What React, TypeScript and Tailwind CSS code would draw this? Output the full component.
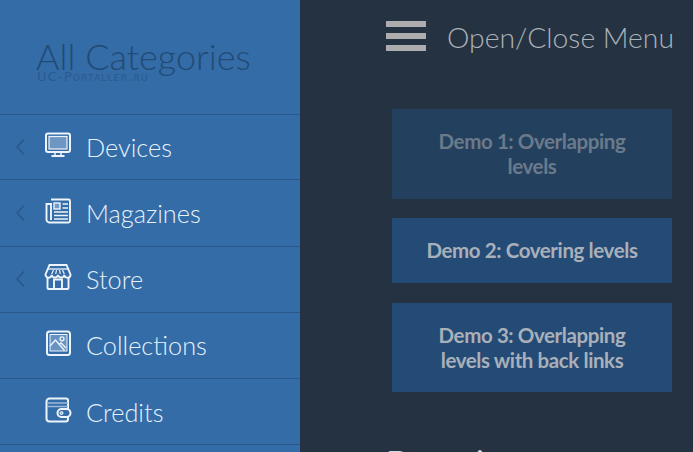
const C = "#eef4fb";
const F = "#9dbada";
const Monitor = () => (
  <svg width="28" height="26" viewBox="0 0 28 26" fill="none" stroke={C} strokeWidth="2">
    <rect x="2" y="1.500" width="24" height="18.500" rx="2" />
    <rect x="5" y="4.500" width="18" height="12.500" fill={F} fillOpacity="0.55" strokeWidth="1.200" />
    <path d="M11 20v3M17 20v3" strokeWidth="1.500" />
    <path d="M7.500 24h13" />
  </svg>
);
const News = () => (
  <svg width="28" height="26" viewBox="0 0 28 26" fill="none" stroke={C} strokeWidth="1.900">
    <path d="M7 1.500h17.500a1.500 1.500 0 0 1 1.500 1.500V23a1.500 1.500 0 0 1-1.500 1.500H5A3 3 0 0 1 2.500 22V6h4.500V22" />
    <rect x="10" y="5" width="6" height="6" fill={F} fillOpacity="0.6" strokeWidth="1.400" />
    <path d="M18.500 6H24M18.500 10H24M10 14H24M10 17.500H24M10 21H24" strokeWidth="1.400" />
  </svg>
);
const Store = () => (
  <svg width="28" height="26" viewBox="0 0 28 26" fill="none" stroke={C} strokeWidth="1.900">
    <path d="M5.500 1h17l4 9.500a3.100 3.100 0 0 1-6.200.3 3.200 3.200 0 0 1-6.300 0 3.200 3.200 0 0 1-6.300 0 3.100 3.100 0 0 1-6.200-.3z" />
    <path d="M4 5h20" strokeWidth="1.300" />
    <path d="M9.500 6l-1.800 4M12.500 6l-.8 4M15.500 6l.8 4M18.500 6l1.800 4" strokeWidth="1.200" />
    <path d="M3.500 13V24a1 1 0 0 0 1 1h19a1 1 0 0 0 1-1V13" />
    <path d="M10 25V15.500h8V25" />
  </svg>
);
const Picture = () => (
  <svg width="28" height="26" viewBox="0 0 28 26" fill="none" stroke={C} strokeWidth="2">
    <rect x="3" y="1.500" width="23" height="23.500" rx="2.500" />
    <rect x="6" y="4.500" width="17" height="16.500" fill={F} fillOpacity="0.5" strokeWidth="1" />
    <circle cx="18" cy="8.800" r="2" strokeWidth="1.300" />
    <path d="M6 16l5.500-6 9 10.500M15 14.500l2-1.500 5 5" strokeWidth="1.400" />
  </svg>
);
const Wallet = () => (
  <svg width="28" height="26" viewBox="0 0 28 26" fill="none" stroke={C} strokeWidth="2">
    <path d="M24 12V3.500A2 2 0 0 0 22 1.500H5.500A3 3 0 0 0 2.500 4.500v17a3 3 0 0 0 3 3H21.500a2.500 2.500 0 0 0 2.500-2.500V20" />
    <path d="M3 6h21M3 9.500h21" stroke={F} strokeWidth="1.500" />
    <rect x="13.500" y="12" width="13" height="8" rx="4" fill="#336ca7" />
    <circle cx="17.500" cy="16" r="1.500" fill={F} strokeWidth="1" />
  </svg>
);

const Chevron = () => (
  <svg width="11" height="18" viewBox="0 0 11 18" fill="none" stroke="#2a5688" strokeWidth="1.300">
    <path d="M9 1.500 2 9l7 7.500" />
  </svg>
);

const items = [
  { label: "Devices", icon: <Monitor />, more: true, cls: "h-[65px]" },
  { label: "Magazines", icon: <News />, more: true, cls: "h-[67px]" },
  { label: "Store", icon: <Store />, more: true, cls: "h-[66px] pb-[2px]" },
  { label: "Collections", icon: <Picture />, more: false, cls: "h-[66px] pb-[2px]" },
  { label: "Credits", icon: <Wallet />, more: false, cls: "h-[66px]" },
];

const demos = [
  { lines: ["Demo 1: Overlapping", "levels"], cls: "h-[90px] bg-[#23415f] text-[#6b7a8a]" },
  { lines: ["Demo 2: Covering levels"], cls: "mt-[19px] h-[65px] bg-[#244b75] text-[#a9b0ba]" },
  { lines: ["Demo 3: Overlapping", "levels with back links"], cls: "mt-[20px] h-[89px] bg-[#244b75] text-[#a9b0ba]" },
];

export default function App() {
  return (
    <div className="flex h-[452px] w-[693px] overflow-hidden bg-[#243241] font-['Lato','Liberation_Sans',sans-serif]">
      <aside className="flex w-[300px] shrink-0 flex-col bg-[#336ca7]">
        <div className="relative h-[115px] border-b border-[#2a5688] pt-[35px] pl-[36px]">
          <h2 className="text-[36px] leading-[43px] font-light whitespace-nowrap text-[#234a74]">All Categories</h2>
          <span className="absolute top-[70px] left-[37px] font-['DejaVu_Sans',sans-serif] text-[13px] leading-[14px] tracking-[1.200px] whitespace-nowrap text-[#2a5a92] [font-variant:small-caps]">
            UC-Portaller.ru
          </span>
        </div>
        {items.map((it) => (
          <div key={it.label} className={`flex shrink-0 items-center border-b border-[#2a5688] pl-[15px] ${it.cls}`}>
            <span className="flex w-[29px] shrink-0">{it.more && <Chevron />}</span>
            <span className="flex w-[29px] shrink-0 -translate-y-[2px]">{it.icon}</span>
            <span className="ml-[13px] text-[25.300px] leading-[30px] font-light text-[#e8f1fa]">{it.label}</span>
          </div>
        ))}
      </aside>
      <main className="min-w-0 flex-1">
        <div className="flex h-[109px] items-start pt-[21px] pl-[86px]">
          <div className="flex h-[30px] w-[40px] shrink-0 flex-col justify-between">
            <span className="h-[6px] bg-[#adadad]" />
            <span className="h-[6px] bg-[#adadad]" />
            <span className="h-[6px] bg-[#adadad]" />
          </div>
          <span className="ml-[21px] -mt-[1px] text-[28.300px] leading-[34px] font-light whitespace-nowrap text-[#adb3b9]">Open/Close Menu</span>
        </div>
        <div className="ml-[92px] flex w-[280px] flex-col">
          {demos.map((d) => (
            <div key={d.lines[0]} className={`flex flex-col items-center justify-center text-[20.500px] leading-[25px] font-bold tracking-[-0.400px] ${d.cls}`}>
              {d.lines.map((l) => (
                <span key={l} className="whitespace-nowrap">{l}</span>
              ))}
            </div>
          ))}
        </div>
        <h2 className="mt-[51px] ml-[86px] text-[34px] leading-[40px] font-normal whitespace-nowrap text-[#d3d6da]">Domains</h2>
      </main>
    </div>
  );
}
